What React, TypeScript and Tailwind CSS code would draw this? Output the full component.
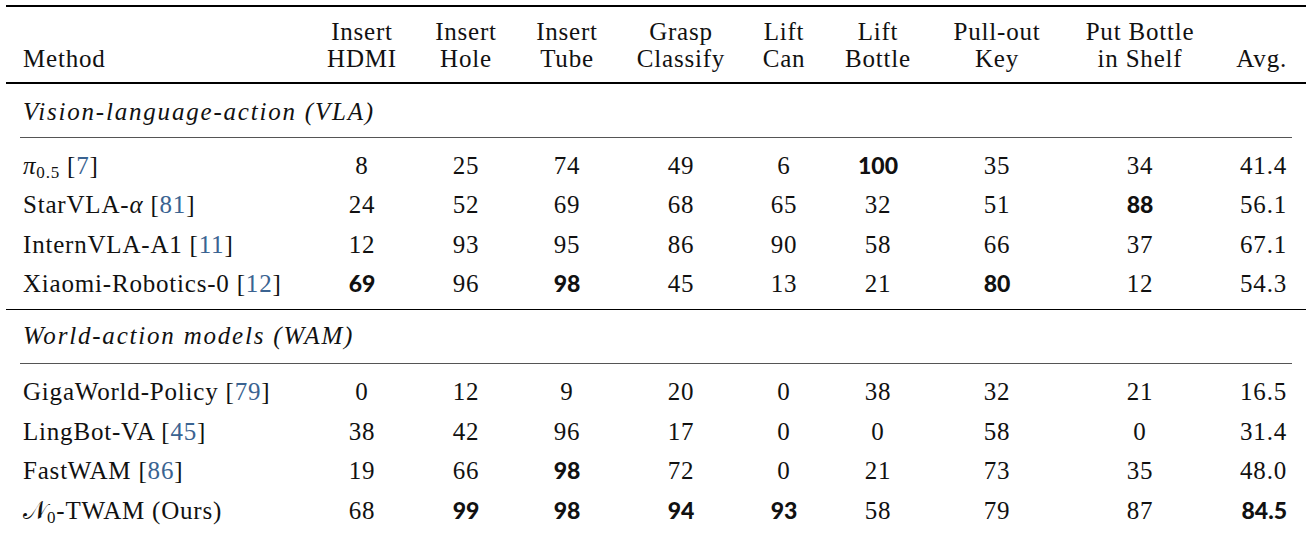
import React from "react";

type Row = { name: React.ReactNode; vals: string[] };

const grid =
  "grid grid-cols-[304px_104px_104px_98px_130px_76px_112px_126px_160px_86px]";

const headers: string[][] = [
  ["Method"],
  ["Insert", "HDMI"],
  ["Insert", "Hole"],
  ["Insert", "Tube"],
  ["Grasp", "Classify"],
  ["Lift", "Can"],
  ["Lift", "Bottle"],
  ["Pull-out", "Key"],
  ["Put Bottle", "in Shelf"],
  ["Avg."],
];

function Cite({ n }: { n: string }) {
  return (
    <span>
      [<span className="text-[#3a6391]">{n}</span>]
    </span>
  );
}

const vla: Row[] = [
  {
    name: (
      <>
        <i>π</i>
        <span className="text-[17px] align-[-4px]">0.5</span> <Cite n="7" />
      </>
    ),
    vals: ["8", "25", "74", "49", "6", "*100", "35", "34", "41.4"],
  },
  {
    name: (
      <>
        StarVLA-<i>α</i> <Cite n="81" />
      </>
    ),
    vals: ["24", "52", "69", "68", "65", "32", "51", "*88", "56.1"],
  },
  {
    name: (
      <>
        InternVLA-A1 <Cite n="11" />
      </>
    ),
    vals: ["12", "93", "95", "86", "90", "58", "66", "37", "67.1"],
  },
  {
    name: (
      <>
        Xiaomi-Robotics-0 <Cite n="12" />
      </>
    ),
    vals: ["*69", "96", "*98", "45", "13", "21", "*80", "12", "54.3"],
  },
];

const wam: Row[] = [
  {
    name: (
      <>
        GigaWorld-Policy <Cite n="79" />
      </>
    ),
    vals: ["0", "12", "9", "20", "0", "38", "32", "21", "16.5"],
  },
  {
    name: (
      <>
        LingBot-VA <Cite n="45" />
      </>
    ),
    vals: ["38", "42", "96", "17", "0", "0", "58", "0", "31.4"],
  },
  {
    name: (
      <>
        FastWAM <Cite n="86" />
      </>
    ),
    vals: ["19", "66", "*98", "72", "0", "21", "73", "35", "48.0"],
  },
  {
    name: (
      <>
        <span className="font-['DejaVu_Serif','DejaVu_Sans','Liberation_Serif',serif] tracking-normal">
          𝒩
        </span>
        <span className="text-[17px] not-italic align-[-4px]">0</span>-TWAM (Ours)
      </>
    ),
    vals: ["68", "*99", "*98", "*94", "*93", "58", "79", "87", "*84.5"],
  },
];

function cellPos(i: number) {
  if (i === 0) return "pl-[17px] text-left";
  if (i === 9) return "pr-[19px] text-right";
  return "text-center";
}

function Val({ v }: { v: string }) {
  if (v.startsWith("*")) {
    return (
      <span className="font-['Lato',sans-serif] text-[23px] font-black tracking-normal text-[#111]">
        {v.slice(1)}
      </span>
    );
  }
  return <span>{v}</span>;
}

function DataRow({ row }: { row: Row }) {
  return (
    <div className={`${grid} h-[39.5px] leading-[39.5px]`}>
      <div className={`${cellPos(0)} whitespace-nowrap`}>{row.name}</div>
      {row.vals.map((v, i) => (
        <div key={i} className={cellPos(i + 1)}>
          <Val v={v} />
        </div>
      ))}
    </div>
  );
}

function GroupLabel({ text, top }: { text: string; top: string }) {
  return (
    <div className={`h-[53px] ${top} pl-[17px] leading-[39px] italic tracking-[1.8px] whitespace-nowrap`}>
      {text}
    </div>
  );
}

export default function App() {
  return (
    <div className="min-h-screen bg-white">
      <div className="ml-[6px] w-[1300px] pt-[5px] font-['Liberation_Serif',serif] text-[25px] tracking-[0.8px] text-[#111]">
        <div className="h-[2px] bg-black" />

        <div className={`${grid} items-end pt-[11px] pb-[10px] leading-[27px]`}>
          {headers.map((h, i) => (
            <div
              key={i}
              className={`${cellPos(i)} flex flex-col ${
                i === 0 ? "items-start" : i === 9 ? "items-end" : "items-center"
              }`}
            >
              {h.map((line) => (
                <span key={line} className="whitespace-nowrap">
                  {line}
                </span>
              ))}
            </div>
          ))}
        </div>

        <div className="h-[1.5px] bg-black" />

        <GroupLabel text="Vision-language-action (VLA)" top="pt-[8px]" />
        <div className="mx-[14px] h-px bg-[#555]" />
        <div className="pt-[8px] pb-[5px]">
          {vla.map((r, i) => (
            <DataRow key={i} row={r} />
          ))}
        </div>

        <div className="h-[1.5px] bg-black" />

        <GroupLabel text="World-action models (WAM)" top="pt-[6px]" />
        <div className="mx-[14px] h-px bg-[#555]" />
        <div className="pt-[8px] pb-[6px]">
          {wam.map((r, i) => (
            <DataRow key={i} row={r} />
          ))}
        </div>

        <div className="h-[2px] bg-black" />
      </div>
    </div>
  );
}
